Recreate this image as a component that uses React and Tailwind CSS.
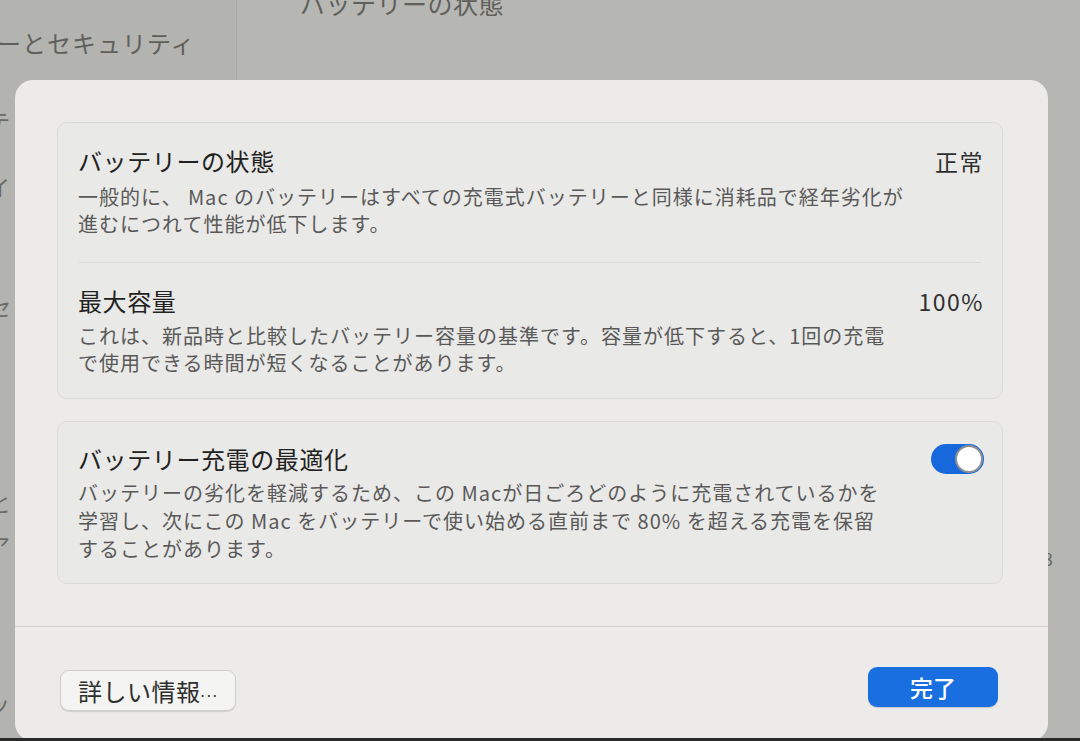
import React from "react";

const FONT = { fontFamily: '"Noto Sans CJK JP", "Noto Sans", sans-serif' };

function Toggle() {
  return (
    <div className="w-[53px] h-[30px] rounded-full bg-[#1768dc] flex items-center justify-end pr-[1px] shrink-0">
      <div className="w-[28px] h-[28px] rounded-full bg-white border-[2px] border-[#8e8f93]" />
    </div>
  );
}

function Row({ title, value, lines, pt, gap, pb, lh, right }) {
  return (
    <div className={`flex justify-between pl-[20px] pr-[18px] ${pt} ${pb}`}>
      <div className="flex flex-col">
        <div className="text-[24px] leading-[30px] text-[#222222] tracking-[0.6px]">{title}</div>
        <div className={`${gap} flex flex-col text-[20px] ${lh} text-[#595959] tracking-[1px]`}>
          {lines.map((l, i) => (
            <div key={i} className="whitespace-pre">{l}</div>
          ))}
        </div>
      </div>
      {right ? right : <div className="text-[23px] leading-[30px] text-[#303030] tracking-[1.5px]">{value}</div>}
    </div>
  );
}

export default function App() {
  return (
    <div className="w-[1080px] h-[741px] relative overflow-hidden bg-[#b6b7b3]" style={FONT}>
      {/* background window */}
      <div className="flex h-full">
        <div className="w-[237px] h-full border-r border-[#a9aaa6] bg-[#b3b4b0] flex flex-col overflow-hidden">
          <div className="mt-[28px] -ml-[3px] text-[24px] leading-[30px] text-[#5f605c] whitespace-nowrap tracking-[1px]">ーとセキュリティ</div>
          <div className="mt-[50px] -ml-[12px] text-[22px] leading-[24px] text-[#6a6b67]">テ</div>
          <div className="mt-[42px] -ml-[12px] text-[22px] leading-[24px] text-[#6a6b67]">イ</div>
          <div className="mt-[96px] -ml-[11px] text-[22px] leading-[24px] text-[#6a6b67]">セ</div>
          <div className="mt-[172px] -ml-[11px] text-[22px] leading-[24px] text-[#6a6b67]">と</div>
          <div className="mt-[18px] -ml-[12px] text-[22px] leading-[24px] text-[#6a6b67]">ア</div>
          <div className="mt-[134px] -ml-[12px] text-[22px] leading-[24px] text-[#6a6b67]">ッ</div>
        </div>
        <div className="flex-1 flex flex-col relative">
          <div className="-mt-[12px] ml-[63px] text-[25px] leading-[30px] text-[#5f605c] tracking-[0.5px]">バッテリーの状態</div>
          <div className="mt-[528px] ml-[806px] text-[18px] leading-[24px] text-[#6b6c68]">3</div>
        </div>
      </div>

      {/* sheet */}
      <div className="absolute left-[15px] top-[80px] w-[1033px] h-[661px] bg-[#ecebe9] rounded-[18px] flex flex-col">
        <div className="pl-[42px] pr-[45px] pt-[42px] flex flex-col gap-[22px]">
          <div className="rounded-[10px] border border-[#dbdbd8] bg-[#e9e9e7] flex flex-col">
            <Row
              title="バッテリーの状態"
              value="正常"
              pt="pt-[23px]"
              gap="mt-[7px]"
              pb="pb-[25px]"
              lh="leading-[27px]"
              lines={[
                "一般的に、 Mac のバッテリーはすべての充電式バッテリーと同様に消耗品で経年劣化が",
                "進むにつれて性能が低下します。",
              ]}
            />
            <div className="mx-[21px] border-t border-[#dcdcd9]" />
            <Row
              title="最大容量"
              value="100%"
              pt="pt-[23px]"
              gap="mt-[6px]"
              pb="pb-[22px]"
              lh="leading-[27px]"
              lines={[
                "これは、新品時と比較したバッテリー容量の基準です。容量が低下すると、1回の充電",
                "で使用できる時間が短くなることがあります。",
              ]}
            />
          </div>
          <div className="rounded-[10px] border border-[#dbdbd8] bg-[#e9e9e7] flex flex-col">
            <Row
              title="バッテリー充電の最適化"
              pt="pt-[22px]"
              gap="mt-[5px]"
              pb="pb-[20px]"
              lh="leading-[28px]"
              right={<div className="pt-[0px]"><Toggle /></div>}
              lines={[
                "バッテリーの劣化を軽減するため、この Macが日ごろどのように充電されているかを",
                "学習し、次にこの Mac をバッテリーで使い始める直前まで 80% を超える充電を保留",
                "することがあります。",
              ]}
            />
          </div>
        </div>
        <div className="mt-[42px] border-t border-[#d3d3d0]" />
        <div className="flex justify-between items-start pl-[45px] pr-[50px] pt-[40px]">
          <div className="mt-[3px] h-[41px] pl-[17px] pr-[16px] rounded-[9px] bg-[#f4f4f2] border border-[#cfcfcc] shadow-[0_1px_1px_rgba(0,0,0,0.12)] flex items-center text-[24px] text-[#2e2e2e] tracking-[0.5px]">
            詳しい情報<span className="text-[15px] tracking-[2px] self-end mb-[8px]">...</span>
          </div>
          <div className="h-[40px] w-[130px] rounded-[9px] bg-[#1a6fe0] shadow-[0_1px_1px_rgba(0,0,0,0.15)] flex items-center justify-center text-[23px] text-white font-medium">
            完了
          </div>
        </div>
      </div>

      <div className="absolute left-0 right-0 bottom-0 h-[3px] bg-[#2a2a2a]" />
    </div>
  );
}
